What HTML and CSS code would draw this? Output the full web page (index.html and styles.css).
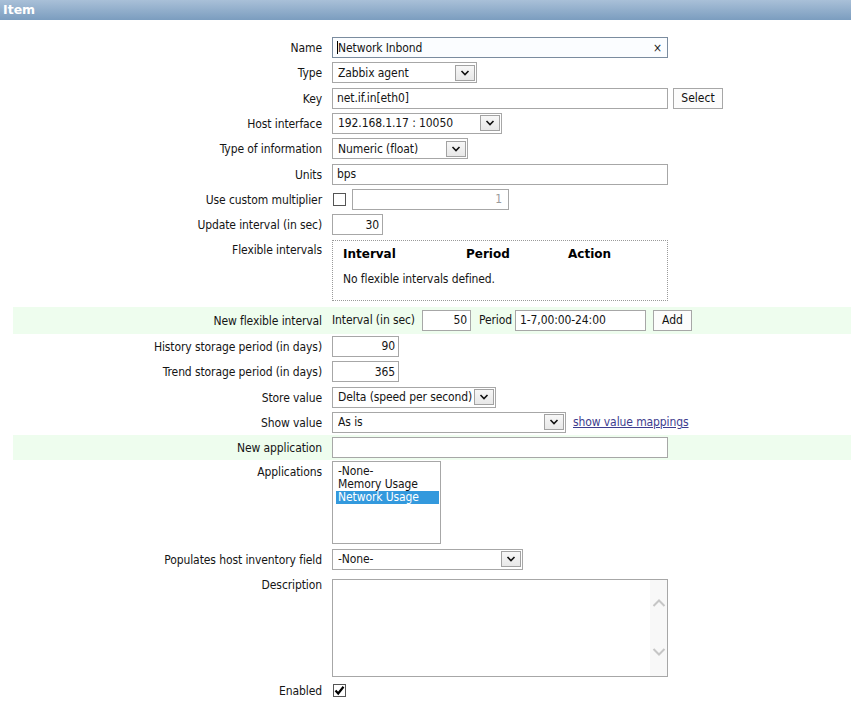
FILE: index.html
```html
<!DOCTYPE html>
<html>
<head>
<meta charset="utf-8">
<title>Item</title>
<link rel="stylesheet" href="styles.css">
</head>
<body>
<div class="header">Item</div>
<form class="form">
  <div class="row">
    <label class="lbl">Name</label>
    <div class="ctl">
      <div class="field focus w-full"><span class="caret"></span><span class="val">Network Inbond</span><span class="clear">×</span></div>
    </div>
  </div>
  <div class="row">
    <label class="lbl">Type</label>
    <div class="ctl">
      <div class="select w-type"><span class="val">Zabbix agent</span><span class="arrow"><svg width="10" height="6" viewBox="0 0 10 6"><path d="M1.5 1 L5 4.5 L8.5 1" fill="none" stroke="#111" stroke-width="1.6"/></svg></span></div>
    </div>
  </div>
  <div class="row">
    <label class="lbl">Key</label>
    <div class="ctl">
      <div class="field w-full"><span class="val">net.if.in[eth0]</span></div>
      <button type="button" class="btn btn-select">Select</button>
    </div>
  </div>
  <div class="row">
    <label class="lbl">Host interface</label>
    <div class="ctl">
      <div class="select w-host"><span class="val">192.168.1.17 : 10050</span><span class="arrow"><svg width="10" height="6" viewBox="0 0 10 6"><path d="M1.5 1 L5 4.5 L8.5 1" fill="none" stroke="#111" stroke-width="1.6"/></svg></span></div>
    </div>
  </div>
  <div class="row">
    <label class="lbl">Type of information</label>
    <div class="ctl">
      <div class="select w-info"><span class="val">Numeric (float)</span><span class="arrow"><svg width="10" height="6" viewBox="0 0 10 6"><path d="M1.5 1 L5 4.5 L8.5 1" fill="none" stroke="#111" stroke-width="1.6"/></svg></span></div>
    </div>
  </div>
  <div class="row">
    <label class="lbl">Units</label>
    <div class="ctl">
      <div class="field w-full"><span class="val">bps</span></div>
    </div>
  </div>
  <div class="row">
    <label class="lbl">Use custom multiplier</label>
    <div class="ctl">
      <span class="cb cb-mult"></span>
      <div class="field num disabled w-mult"><span class="val">1</span></div>
    </div>
  </div>
  <div class="row">
    <label class="lbl">Update interval (in sec)</label>
    <div class="ctl">
      <div class="field num w-upd"><span class="val">30</span></div>
    </div>
  </div>
  <div class="row row-flex">
    <label class="lbl">Flexible intervals</label>
    <div class="ctl">
      <div class="flexbox">
        <div class="fhead"><span>Interval</span><span>Period</span><span>Action</span></div>
        <div class="fempty">No flexible intervals defined.</div>
      </div>
    </div>
  </div>
  <div class="row hl hl-flex">
    <label class="lbl">New flexible interval</label>
    <div class="ctl">
      <span class="inl inl-int">Interval (in sec)</span>
      <div class="field num w-int"><span class="val">50</span></div>
      <span class="inl inl-per">Period</span>
      <div class="field w-per"><span class="val">1-7,00:00-24:00</span></div>
      <button type="button" class="btn btn-add">Add</button>
    </div>
  </div>
  <div class="row">
    <label class="lbl">History storage period (in days)</label>
    <div class="ctl">
      <div class="field num w-days"><span class="val">90</span></div>
    </div>
  </div>
  <div class="row">
    <label class="lbl">Trend storage period (in days)</label>
    <div class="ctl">
      <div class="field num w-days"><span class="val">365</span></div>
    </div>
  </div>
  <div class="row">
    <label class="lbl">Store value</label>
    <div class="ctl">
      <div class="select w-store"><span class="val">Delta (speed per second)</span><span class="arrow"><svg width="10" height="6" viewBox="0 0 10 6"><path d="M1.5 1 L5 4.5 L8.5 1" fill="none" stroke="#111" stroke-width="1.6"/></svg></span></div>
    </div>
  </div>
  <div class="row">
    <label class="lbl">Show value</label>
    <div class="ctl">
      <div class="select w-show"><span class="val">As is</span><span class="arrow"><svg width="10" height="6" viewBox="0 0 10 6"><path d="M1.5 1 L5 4.5 L8.5 1" fill="none" stroke="#111" stroke-width="1.6"/></svg></span></div>
      <a class="link" href="#">show value mappings</a>
    </div>
  </div>
  <div class="row hl hl-app">
    <label class="lbl">New application</label>
    <div class="ctl">
      <div class="field w-full"></div>
    </div>
  </div>
  <div class="row row-apps">
    <label class="lbl">Applications</label>
    <div class="ctl">
      <div class="listbox">
        <div class="opt">-None-</div>
        <div class="opt">Memory Usage</div>
        <div class="opt sel">Network Usage</div>
      </div>
    </div>
  </div>
  <div class="row">
    <label class="lbl">Populates host inventory field</label>
    <div class="ctl">
      <div class="select w-inv"><span class="val">-None-</span><span class="arrow"><svg width="10" height="6" viewBox="0 0 10 6"><path d="M1.5 1 L5 4.5 L8.5 1" fill="none" stroke="#111" stroke-width="1.6"/></svg></span></div>
    </div>
  </div>
  <div class="row row-desc">
    <label class="lbl">Description</label>
    <div class="ctl">
      <div class="desc">
        <div class="desc-text"></div>
        <div class="scroll">
          <svg width="14" height="8" viewBox="0 0 14 8"><path d="M1.5 7 L7 1.5 L12.5 7" fill="none" stroke="#c6c6c6" stroke-width="2"/></svg>
          <svg width="14" height="8" viewBox="0 0 14 8"><path d="M1.5 1 L7 6.5 L12.5 1" fill="none" stroke="#c6c6c6" stroke-width="2"/></svg>
        </div>
      </div>
    </div>
  </div>
  <div class="row">
    <label class="lbl">Enabled</label>
    <div class="ctl">
      <span class="cb cb-on"><svg width="11" height="11" viewBox="0 0 11 11"><path d="M1.5 5.5 L4.2 8.5 L9.5 1.8" fill="none" stroke="#000" stroke-width="2.2"/></svg></span>
    </div>
  </div>
</form>
</body>
</html>
```
FILE: styles.css
```css
html, body {
  margin: 0;
  padding: 0;
  background: #fff;
}
body {
  font-family: "DejaVu Sans Condensed", "DejaVu Sans", sans-serif;
  font-stretch: condensed;
  font-size: 12px;
  letter-spacing: -0.1px;
  color: #151515;
}
.header {
  height: 20px;
  line-height: 20px;
  padding-left: 3px;
  background: linear-gradient(#a9c0d8, #7b9dbf);
  color: #fff;
  font-family: "DejaVu Sans", sans-serif;
  font-stretch: normal;
  font-weight: bold;
  font-size: 12.5px;
  letter-spacing: 0;
}
.form {
  margin: 15px 0 0;
  padding-left: 13px;
}
.row {
  display: flex;
  align-items: flex-start;
  padding: 2px 0 2.33px;
}
.lbl {
  width: 319px;
  height: 21px;
  flex-shrink: 0;
  box-sizing: border-box;
  padding: 1px 10px 0 0;
  text-align: right;
  line-height: 21px;
  white-space: nowrap;
}
.ctl {
  display: flex;
  align-items: center;
  min-height: 21px;
}
.field {
  height: 21px;
  box-sizing: border-box;
  border: 1px solid #a7a7a7;
  background: #fff;
  display: flex;
  align-items: center;
  padding: 0 3px 0 4px;
  white-space: nowrap;
}
.field.focus {
  border-color: #7b8c9f;
  background: #fbfdff;
}
.field .val { flex: 1; }
.field.num { justify-content: flex-end; padding-right: 3px; }
.field.num .val { flex: none; }
.field.disabled { color: #9a9a9a; padding-right: 6px; }
.caret {
  width: 1px;
  height: 13px;
  background: #000;
}
.clear {
  font-family: "DejaVu Sans", sans-serif;
  font-size: 12px;
  margin-right: 2px;
  color: #222;
}
.w-full { width: 336px; }
.w-mult { width: 157px; }
.w-upd { width: 51px; }
.w-int { width: 49px; }
.w-per { width: 131px; }
.w-days { width: 67px; }
.select {
  height: 21px;
  box-sizing: border-box;
  border: 1px solid #a7a7a7;
  background: #fff;
  display: flex;
  align-items: center;
  padding: 0 1px 0 5px;
  white-space: nowrap;
}
.select .val { flex: 1; overflow: hidden; }
.arrow {
  width: 20px;
  height: 16px;
  box-sizing: border-box;
  border: 1px solid #a2a2a2;
  background: linear-gradient(#f7f7f7, #e8e8e8);
  display: flex;
  align-items: center;
  justify-content: center;
  flex-shrink: 0;
}
.w-type { width: 145px; }
.w-host { width: 170px; }
.w-info { width: 136px; }
.w-store { width: 164px; }
.w-show { width: 234px; }
.w-inv { width: 191px; }
.btn {
  height: 21px;
  box-sizing: border-box;
  border: 1px solid #a7a7a7;
  background: #fcfcfc;
  font: inherit;
  color: #111;
  padding: 0;
  cursor: pointer;
}
.btn-select { width: 50px; margin-left: 5px; }
.btn-add { width: 39px; margin-left: 7px; }
.cb {
  width: 13px;
  height: 13px;
  box-sizing: border-box;
  border: 1px solid #555;
  background: #fff;
  display: inline-flex;
  align-items: center;
  justify-content: center;
  margin-left: 1px;
}
.cb-mult { margin-right: 6px; }
.row-flex { padding-bottom: 6.33px; }
.row-flex .lbl { padding-top: 0; }
.flexbox {
  width: 336px;
  height: 61px;
  box-sizing: border-box;
  border: 1px dotted #9a9a9a;
  padding: 6px 10px 0;
}
.fhead {
  display: grid;
  grid-template-columns: 123px 102px 1fr;
  font-family: "DejaVu Sans", sans-serif;
  font-stretch: normal;
  font-weight: bold;
  font-size: 12px;
  letter-spacing: 0;
  line-height: 14px;
  color: #000;
}
.fempty {
  margin-top: 11px;
  line-height: 14px;
}
.hl {
  background: #eefdee;
}
.hl-flex { padding: 3px 0 3px; }
.inl { white-space: nowrap; }
.inl-int { width: 90px; }
.inl-per { width: 36px; margin-left: 8px; }
.link {
  color: #3d3d8e;
  text-decoration: underline;
  margin-left: 7px;
}
.hl-app { padding: 2px 0 2px; }
.row-apps { padding: 1px 0 2.67px; }
.listbox {
  width: 109px;
  height: 83px;
  box-sizing: border-box;
  border: 1px solid #a7a7a7;
  padding: 3px 1px 0 3px;
  background: #fff;
}
.opt {
  line-height: 13px;
  padding-left: 2px;
  white-space: nowrap;
}
.opt.sel {
  background: #3399dd;
  color: #fff;
}
.row-desc { padding: 2.67px 0 1.5px; }
.row-desc .lbl { padding-top: 0; }
.desc {
  width: 336px;
  height: 98px;
  box-sizing: border-box;
  border: 1px solid #a7a7a7;
  display: flex;
  background: #fff;
  margin-top: 4px;
}
.desc-text { flex: 1; }
.scroll {
  width: 17px;
  background: #f8f8f8;
  display: flex;
  flex-direction: column;
  justify-content: space-between;
  align-items: center;
  padding: 19px 0 20px;
}
```
